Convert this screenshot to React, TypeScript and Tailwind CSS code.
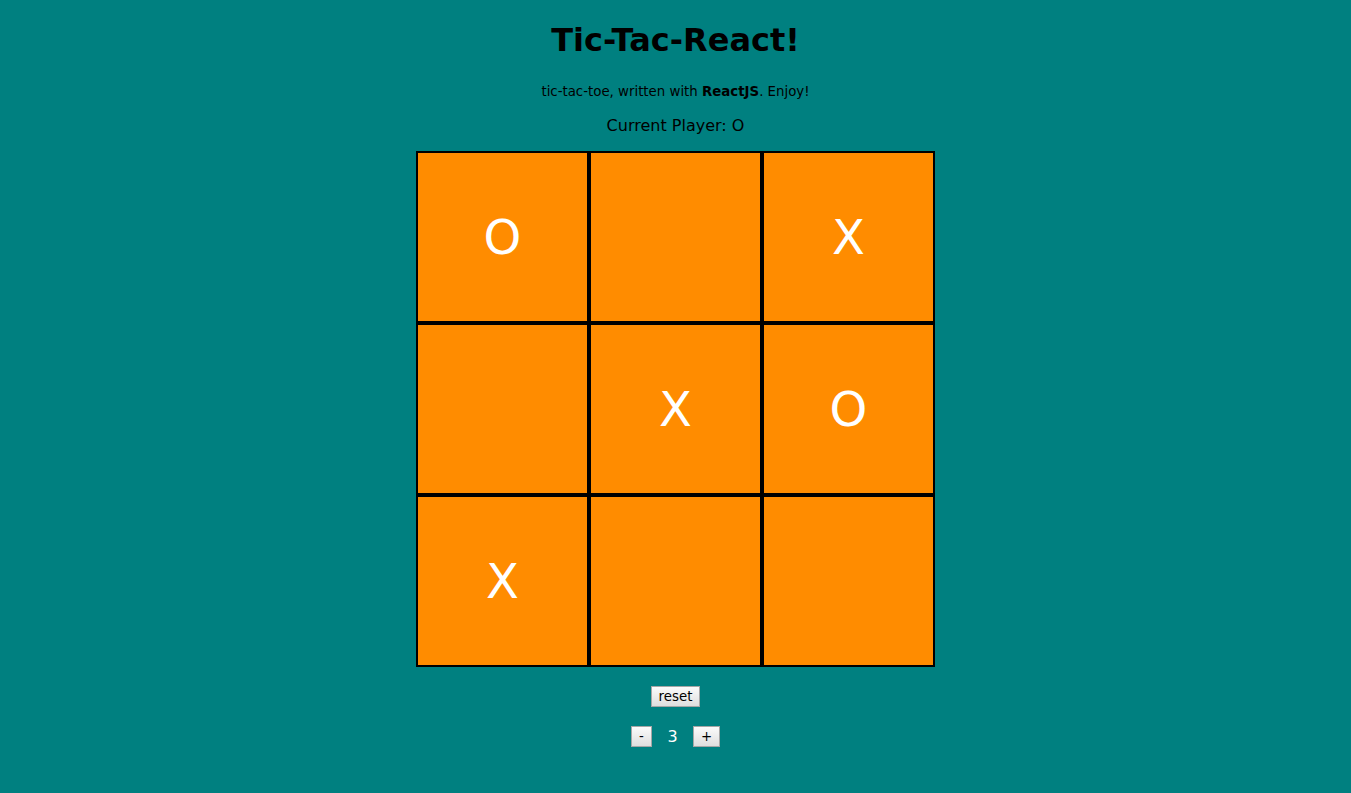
const BOARD = ["O", "", "X", "", "X", "O", "X", "", ""];

function Button({ label, width }: { label: string; width: string }) {
  return (
    <button
      className={`${width} h-[21px] border border-[#a6a6a6] bg-gradient-to-b from-[#fbfbfb] to-[#dedede] text-[13.33px] leading-[15px] text-black`}
    >
      {label}
    </button>
  );
}

function App() {
  return (
    <div
      className="min-h-screen bg-[#008080] flex flex-col items-center text-black"
      style={{ fontFamily: '"DejaVu Sans", Verdana, sans-serif' }}
    >
      <h1 className="mt-[22px] text-[32px] leading-[37px] font-bold">Tic-Tac-React!</h1>
      <p className="mt-[25px] text-[13.33px] leading-[16px]">
        tic-tac-toe, written with <b>ReactJS</b>. Enjoy!
      </p>
      <p className="mt-[16px] text-[16px] leading-[19px]">Current Player: O</p>

      <div className="mt-[16px] grid w-[519px] grid-cols-3">
        {BOARD.map((mark, i) => (
          <div
            key={i}
            className="h-[172px] border-2 border-black bg-[#ff8c00] flex items-center justify-center text-[48px] text-white"
          >
            {mark}
          </div>
        ))}
      </div>

      <div className="mt-[19px] flex">
        <Button label="reset" width="w-[49px]" />
      </div>

      <div className="mt-[19px] flex items-center">
        <Button label="-" width="w-[21px]" />
        <span className="w-[41px] text-center text-[16px] leading-[19px] text-white">3</span>
        <Button label="+" width="w-[27px]" />
      </div>
    </div>
  );
}

export default App;
